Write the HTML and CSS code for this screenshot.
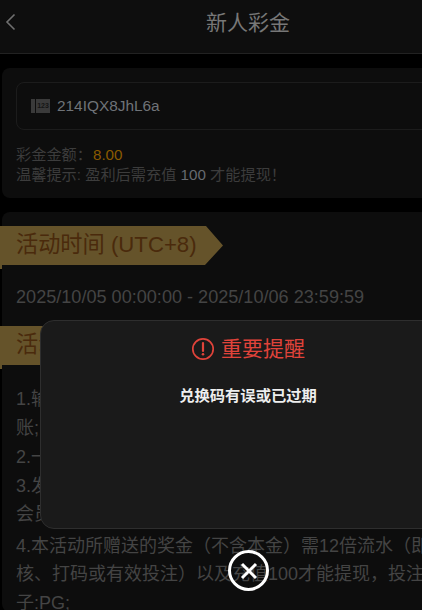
FILE: index.html
```html
<!DOCTYPE html>
<html lang="zh">
<head>
<meta charset="utf-8">
<title>新人彩金</title>
<link rel="stylesheet" href="styles.css">
</head>
<body>
<div class="page">
  <header class="topbar">
    <svg class="back" width="12" height="18" viewBox="0 0 12 18"><path d="M10.5 1.5 3 9l7.5 7.5" fill="none" stroke="#6f6f6f" stroke-width="1.6"/></svg>
    <h1 class="title">新人彩金</h1>
  </header>
  <main class="content">
    <section class="card code-card">
      <div class="code-box">
        <span class="ticket"><span class="stub"></span><span class="num">123</span></span>
        <span class="code">214IQX8JhL6a</span>
      </div>
      <div class="info">
        <div>彩金金额：<span class="amount">8.00</span></div>
        <div>温馨提示: 盈利后需充值 <span class="strong">100</span> 才能提现！</div>
      </div>
    </section>
    <section class="card rules-card">
      <h2 class="tag">活动时间 (UTC+8)</h2>
      <p class="time">2025/10/05 00:00:00 - 2025/10/06 23:59:59</p>
      <h2 class="tag">活动规则</h2>
      <div class="rules">
        <p>1.输入兑换码后点击领取按钮，彩金自动发放至钱包内并到账;</p>
        <p>2.一个账号在活动期间只能领取一次彩金奖励;</p>
        <p>3.发现任何恶意套利或违规行为，平台将取消资格及奖励，会员须遵守规则;</p>
        <p class="last">4.本活动所赠送的奖金（不含本金）需12倍流水（即稽核、打码或有效投注）以及充值100才能提现，投注游戏电子:PG;</p>
      </div>
    </section>
  </main>
  <div class="modal">
    <div class="modal-head">
      <svg width="24" height="24" viewBox="0 0 24 24"><circle cx="12" cy="12" r="10.2" fill="none" stroke="#e0433a" stroke-width="1.7"/><path d="M12 6v8" stroke="#e0433a" stroke-width="2.2" stroke-linecap="round"/><circle cx="12" cy="17.3" r="1.3" fill="#e0433a"/></svg>
      <span>重要提醒</span>
    </div>
    <p class="modal-msg">兑换码有误或已过期</p>
  </div>
  <button class="close" aria-label="关闭">
    <svg width="20" height="20" viewBox="0 0 20 20"><path d="M3 3l14 14M17 3 3 17" stroke="#fff" stroke-width="3"/></svg>
  </button>
</div>
</body>
</html>
```

FILE: styles.css
```css
* { box-sizing: border-box; }
html, body { margin: 0; padding: 0; height: 100%; overflow: hidden; background: #000; }
body { font-family: "Liberation Sans", "Noto Sans CJK SC", sans-serif; }
.page { position: relative; width: 496px; height: 610px; overflow: hidden; color: #444; }
.topbar { height: 54px; padding-bottom: 11px; background: #0e0e0e; border-bottom: 1px solid #222; display: flex; align-items: center; justify-content: center; position: relative; }
.back { position: absolute; left: 4px; top: 13px; }
.title { margin: 0; font-size: 21px; font-weight: 400; color: #777; }
.content { padding: 14px 0 0 2px; }
.card { background: #0d0d0d; border-radius: 8px 0 0 8px; }
.code-card { height: 130px; padding: 14px; margin-bottom: 14px; }
.code-box { height: 48px; border: 1px solid #1c1c1c; border-radius: 8px; display: flex; align-items: center; padding-left: 14px; gap: 7px; }
.ticket { display: flex; gap: 1px; height: 14px; }
.stub { width: 4px; background: #3a3a3a; }
.num { width: 14px; background: #3a3a3a; color: #151515; font-size: 7px; font-weight: 700; line-height: 14px; text-align: center; }
.code { font-size: 15.4px; color: #6f7378; }
.info { margin-top: 15px; font-size: 15.2px; line-height: 20px; color: #3c3c3c; }
.amount { color: #8a5a00; margin-left: 1px; }
.strong { color: #666a70; }
.rules-card { height: 400px; padding-top: 14px; }
.tag { margin: 0 0 -4px -2px; width: 223px; height: 43px; padding-left: 16px; background: #65532a; color: #4a2a0c; font-size: 22.2px; font-weight: 400; line-height: 37px; white-space: nowrap; clip-path: polygon(0 0, 206px 0, 223px 19.5px, 205px 39px, 2px 39px, 2px 43px, 0 43px); }
.time { margin: 19px 0 16px; padding-left: 14px; font-size: 18.1px; line-height: 26px; white-space: nowrap; }
.rules { padding: 20px 0 0 14px; width: 480px; font-size: 18px; line-height: 28.5px; }
.rules p { margin: 0 0 0.5px; }
.rules .last { margin-top: 3px; }
.modal { position: absolute; left: 40px; top: 320px; width: 416px; height: 209px; background: #1a1a1a; border: 1px solid #2e2e2e; border-radius: 14px; }
.modal-head { display: flex; align-items: center; justify-content: center; gap: 6px; margin-top: 16px; color: #e0433a; font-size: 21px; line-height: 24px; }
.modal-msg { margin: 25px 0 0; text-align: center; color: #eee; font-size: 15.3px; font-weight: 700; line-height: 20px; }
.close { position: absolute; left: 228px; top: 550px; width: 41px; height: 41px; padding: 0; border: 3px solid #fff; border-radius: 50%; background: transparent; display: flex; align-items: center; justify-content: center; }
```
